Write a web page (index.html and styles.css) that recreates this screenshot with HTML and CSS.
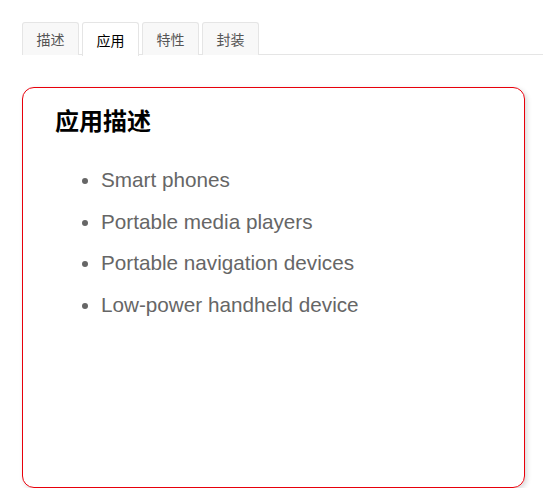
FILE: index.html
```html
<!DOCTYPE html>
<html lang="zh">
<head>
<meta charset="utf-8">
<link rel="stylesheet" href="styles.css">
</head>
<body>
<div class="page">
  <div class="tabs">
    <div class="tab">描述</div>
    <div class="tab active">应用</div>
    <div class="tab">特性</div>
    <div class="tab">封装</div>
  </div>
  <div class="card">
    <h2 class="title">应用描述</h2>
    <ul class="list">
      <li>Smart phones</li>
      <li>Portable media players</li>
      <li>Portable navigation devices</li>
      <li>Low-power handheld device</li>
    </ul>
  </div>
</div>
</body>
</html>
```

FILE: styles.css
```css
html, body {
  margin: 0;
  padding: 0;
  background: #fff;
}
body {
  font-family: "Liberation Sans", Arial, "Noto Sans CJK SC", sans-serif;
}
.page {
  padding: 22px 0 0 22px;
}
.tabs {
  display: flex;
  gap: 3px;
  border-bottom: 1px solid #e5e5e5;
  height: 33px;
  box-sizing: border-box;
}
.tab {
  box-sizing: border-box;
  width: 57px;
  height: 33px;
  display: flex;
  align-items: center;
  justify-content: center;
  font-size: 14px;
  color: #555;
  background: #f8f8f8;
  border: 1px solid #e5e5e5;
  border-bottom: none;
  border-radius: 3px 3px 0 0;
}
.tab.active {
  background: #fff;
  color: #000;
  margin-bottom: -1px;
  height: 34px;
}
.card {
  margin-top: 32px;
  width: 503px;
  height: 401px;
  box-sizing: border-box;
  border: 1px solid #e8000b;
  border-radius: 12px;
  box-shadow: 2px 2px 5px rgba(0, 0, 0, 0.15);
  padding: 19px 32px;
}
.title {
  margin: 0;
  font-size: 24px;
  font-weight: bold;
  line-height: 30px;
  color: #000;
}
.list {
  margin: 22px 0 0 0;
  padding-left: 46px;
  color: #666;
  font-size: 20.7px;
  line-height: 41.7px;
}
```
